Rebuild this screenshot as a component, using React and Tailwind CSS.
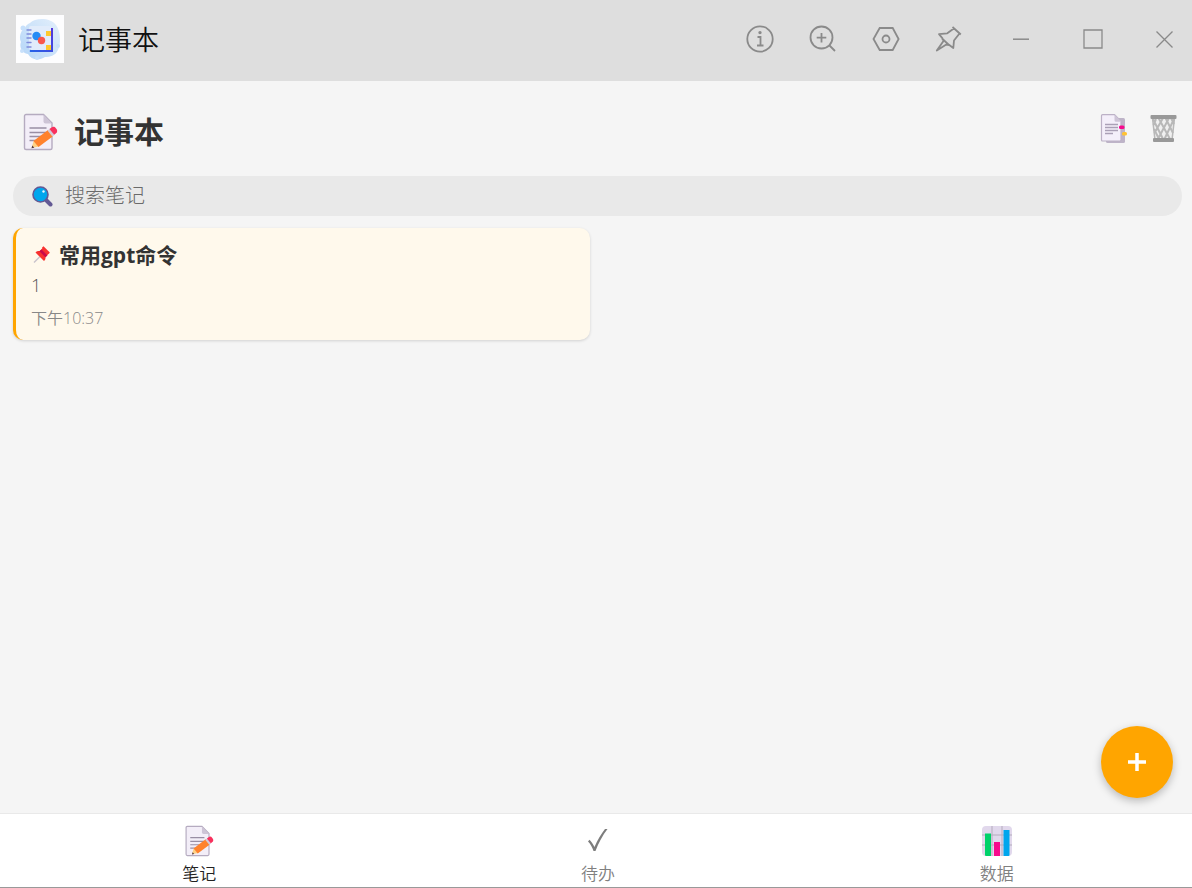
import { useState } from "react";

const MemoIcon = ({ className }) => (
  <svg className={className} viewBox="0 0 36 38" aria-hidden="true">
    <path d="M4 1.5h17.5L30 10v25a1.5 1.5 0 0 1-1.5 1.5H4A1.5 1.5 0 0 1 2.5 35V3A1.500 1.500 0 0 1 4 1.500z" fill="#f3eef8" stroke="#b5abc0" strokeWidth="1.4" />
    <path d="M21.5 1.5v7a2 2 0 0 0 2 2H30z" fill="#cdc4d6" />
    <path d="M7.500 15h17M7.500 19.500h17M7.500 23.500h12M7.500 27.500h8" stroke="#998ea4" strokeWidth="1.4" />
    <path d="M9.500 35l2.300-7.500 5.200 6z" fill="#ffd184" />
    <path d="M11.500 28L26 17l5 6.200L16.500 34z" fill="#ff822d" />
    <path d="M25.500 17.500l2.500-1.800 4.500 6-2 2z" fill="#d3cbd8" />
    <path d="M27.500 16l2-1.600c1.600-1.200 3.300-.6 4.200.6l.9 1.200c1 1.500.6 3-.6 4l-1.800 1.500z" fill="#f8315d" />
    <path d="M9.500 35.300l.8-2.800 2 2.200z" fill="#533a42" />
  </svg>
);

const PagesIcon = () => (
  <svg className="w-7 h-8" viewBox="0 0 28 32" aria-hidden="true">
    <rect x="6" y="5" width="19" height="25" rx="1.5" fill="#beb4c8" />
    <path d="M2.500 1.700H14.500l6.500 6.500V27a1 1 0 0 1-1 1H2.500a1 1 0 0 1-1-1V2.700a1 1 0 0 1 1-1z" fill="#f4effa" stroke="#bcb1c6" strokeWidth="1.200" />
    <path d="M14.500 1.500v5.700a1.500 1.500 0 0 0 1.500 1.500h5.500z" fill="#cdc4d6" />
    <path d="M5 11.500h13M5 14.500h13M5 17.500h13M5 20.500h8" stroke="#aaa0b6" strokeWidth="1.500" />
    <rect x="19" y="12.500" width="5.500" height="3.500" rx="1.500" fill="#f70a8d" />
    <rect x="22" y="19" width="5" height="3.500" rx="1.500" fill="#ffc233" />
  </svg>
);

const BasketIcon = () => (
  <svg className="w-7 h-8" viewBox="0 0 28 32" aria-hidden="true">
    <path d="M2.500 5h22L22 27H5z" fill="#f0f0f0" stroke="#b8b8b8" strokeWidth="1.500" />
    <path d="M3 6l10 20M8.500 5L20 26M15.500 5L23 20M21 5l3 6M6 6L3.500 12M13 5L4.500 20M19 5L8 26M24 6L14.500 26M4 16l5 10" fill="none" stroke="#b8b8b8" strokeWidth="2" />
    <rect x="0.500" y="2" width="26" height="4" rx="1" fill="#999" />
    <rect x="3" y="25" width="21" height="4" rx="1" fill="#999" />
  </svg>
);

const SearchIcon = () => (
  <svg className="w-[22px] h-[22px]" viewBox="0 0 22 22" aria-hidden="true">
    <path d="M14.500 14.500l5 5" stroke="#635994" strokeWidth="4" strokeLinecap="round" />
    <circle cx="9.500" cy="9.500" r="7.500" fill="#00a6ed" stroke="#635994" strokeWidth="1.600" />
    <circle cx="12.500" cy="6.500" r="1.200" fill="#e8f7ff" />
  </svg>
);

const PushpinIcon = () => (
  <svg className="w-[18px] h-[18px]" viewBox="0 0 18 18" aria-hidden="true">
    <path d="M1 16.500l6-6" stroke="#c9c3cc" strokeWidth="1.400" />
    <path d="M2.500 6.500C3.700 5 5.500 4.800 6.800 5L10 1.500l6 6-3.500 3.200c.2 1.800-.2 3.200-1.500 4.300z" fill="#f8312f" />
    <path d="M8.500 3.500l6 6-2 1.800L6.300 5.300z" fill="#ca0b4a" />
    <path d="M9 1.500L10.500.3 16.800 6.500 15.800 8z" fill="#f8312f" />
  </svg>
);

const ChartIcon = ({ className }) => (
  <svg className={className} viewBox="0 0 30 32" aria-hidden="true">
    <rect y="1" width="30" height="30" rx="4" fill="#e1d8ec" />
    <path d="M0 10h30M0 20h30M10 1v30M20 1v30" stroke="#b4acbc" strokeWidth="1" />
    <path d="M3 8.500h6V31H4q-1 0-1-1z" fill="#00d26a" />
    <path d="M12 17h6v14h-6z" fill="#f70a8d" />
    <path d="M21.500 5h6v25q0 1-1 1h-5z" fill="#00a6ed" />
  </svg>
);

const CheckIcon = ({ className }) => (
  <svg className={className} viewBox="0 0 30 32" aria-hidden="true">
    <path d="M5 16.500l1.500-1.700c1.700 1.500 3.700 4.500 5 7.200C14.500 15 18.500 8.500 22 4h2.500C19.500 10.500 15.500 18 12.500 26h-2C9.500 23 7.500 19 5 16.500z" fill="#7d7d7d" />
  </svg>
);

const AppLogo = () => (
  <svg className="w-12 h-12" viewBox="0 0 48 48" aria-hidden="true">
    <defs>
      <linearGradient id="cloud" x1="1" y1="0" x2="0" y2="1">
        <stop offset="0" stopColor="#e3effb" />
        <stop offset="1" stopColor="#b3d5f8" />
      </linearGradient>
      <linearGradient id="spine" x1="0" y1="1" x2="1" y2="0">
        <stop offset="0" stopColor="#2464e8" />
        <stop offset="1" stopColor="#5535d8" />
      </linearGradient>
    </defs>
    <rect width="48" height="48" fill="#fdfdfe" />
    <path d="M14 8c5-5 20-6 26 2 5 7 5 19 2 25-3 6-8 7-13 7-6 4-14 3-17-3-6-1-9-7-7-12-3-6 1-13 4-14 1-3 3-4 5-5z" fill="url(#cloud)" />
    <g fill="#c7e0fb">
      <circle cx="7" cy="13" r="2.500" />
      <circle cx="6" cy="36" r="2" />
      <circle cx="21" cy="43" r="2" />
      <circle cx="42" cy="31" r="2" />
    </g>
    <path d="M17 13h20v24H15q-2 0-1-2z" fill="url(#spine)" />
    <rect x="13" y="11" width="22" height="24" rx="2" fill="#e1ecfb" />
    <path d="M30 16h5v5h-5zM30 30h5v5h-5z" fill="#fdc92e" />
    <path d="M11 15h4M11 19h4M11 23h4M11 27.500h4M11 32h4" stroke="#7f8cdc" strokeWidth="1.400" strokeLinecap="round" />
    <circle cx="20.500" cy="21" r="4.200" fill="#258cf5" />
    <circle cx="25.500" cy="25.500" r="3.700" fill="#f8584e" />
  </svg>
);

const toolIcons = [
  {
    label: "关于",
    draw: (
      <>
        <circle cx="14" cy="14" r="12.700" />
        <path d="M11.500 12h3v8.500M11 20.500h6.500" />
        <circle cx="14" cy="7.600" r="0.800" fill="currentColor" />
      </>
    ),
  },
  {
    label: "放大",
    draw: (
      <>
        <circle cx="12.500" cy="12.500" r="11" />
        <path d="M12.500 8v9.500M7.700 12.700h9.600M20.500 20.500l5.500 5.500" />
      </>
    ),
  },
  {
    label: "设置",
    draw: (
      <>
        <path d="M7.700 3h13l5.900 11-5.900 11h-13L1.500 14z" />
        <circle cx="14" cy="14" r="3.500" />
      </>
    ),
  },
  {
    label: "置顶",
    draw: (
      <path
        d="M17.500 2l8.300 7.500M18.800 3.500l-6.500 4.800-8.300.8 3.300 4L8.500 16 1.800 25.500l9.500-6 3 .5 4 3 .7-7.500 5.500-7M7 13.500l7 6.500"
        strokeLinejoin="round"
      />
    ),
  },
];

const TitleBar = () => (
  <header className="flex items-center justify-between h-[81px] shrink-0 pl-4 bg-[#dedede]">
    <div className="flex items-center gap-[14px] pb-1">
      <AppLogo />
      <span className="pt-[2px] text-[27px] leading-9 font-[350] text-[#111]">记事本</span>
    </div>
    <div className="flex items-center text-[#8a8a8a] pb-[3px]">
      <div className="flex gap-[35px] mr-11">
        {toolIcons.map((icon) => (
          <button key={icon.label} type="button" aria-label={icon.label}>
            <svg className="w-7 h-7" viewBox="0 0 28 28" fill="none" stroke="currentColor" strokeWidth="1.800">
              {icon.draw}
            </svg>
          </button>
        ))}
      </div>
      <div className="flex gap-11 pr-[13px]">
        <button type="button" aria-label="最小化">
          <svg className="w-7 h-7" viewBox="0 0 28 28" stroke="currentColor" strokeWidth="1.500">
            <path d="M6 14.200h16" />
          </svg>
        </button>
        <button type="button" aria-label="最大化">
          <svg className="w-7 h-7" viewBox="0 0 28 28" fill="none" stroke="currentColor" strokeWidth="1.300">
            <path d="M5 5h18v18H5z" />
          </svg>
        </button>
        <button type="button" aria-label="关闭">
          <svg className="w-7 h-7" viewBox="0 0 28 28" stroke="currentColor" strokeWidth="1.300">
            <path d="M5.500 6.500l16 16M21.500 6.500l-16 16" />
          </svg>
        </button>
      </div>
    </div>
  </header>
);

const NoteCard = ({ title, content, time }) => (
  <article className="rounded-[10px] border-l-[3px] border-[#ffa500] bg-[#fff9ec] pl-[15px] pr-4 pt-[13px] pb-[10px] shadow-[0_1px_3px_rgba(0,0,0,0.15)]">
    <h2 className="flex items-center gap-2 pl-[2px] text-[21px] leading-7 font-bold text-[#333]">
      <PushpinIcon />
      {title}
    </h2>
    <p className="mt-1 text-lg leading-6 font-[350] text-[#555]">{content}</p>
    <time className="block mt-[9px] text-base leading-6 font-[350] text-[#888]">{time}</time>
  </article>
);

const tabs = [
  { id: "notes", label: "笔记", icon: MemoIcon },
  { id: "todo", label: "待办", icon: CheckIcon },
  { id: "data", label: "数据", icon: ChartIcon },
];

const notes = [{ id: 1, title: "常用gpt命令", content: "1", time: "下午10:37" }];

const App = () => {
  const [activeTab, setActiveTab] = useState("notes");
  const [keyword, setKeyword] = useState("");

  const visibleNotes = notes.filter((note) => note.title.includes(keyword));

  return (
    <div className="flex flex-col h-screen overflow-hidden bg-[#f5f5f5] font-['Open_Sans','Noto_Sans_CJK_SC',sans-serif]">
      <TitleBar />

      <main className="flex-1 pl-[13px] pr-[10px] pt-7">
        <div className="flex items-start justify-between h-[67px]">
          <h1 className="flex items-center gap-4 pl-[9px] text-[30px] leading-[46px] font-bold text-[#333]">
            <MemoIcon className="w-9 h-[38px]" />
            记事本
          </h1>
          <div className="flex gap-[22px] pt-1 pr-1">
            <button type="button" aria-label="笔记列表">
              <PagesIcon />
            </button>
            <button type="button" aria-label="回收站">
              <BasketIcon />
            </button>
          </div>
        </div>

        <label className="flex items-center gap-3 h-10 pl-[18px] pr-4 rounded-full bg-[#e9e9e9]">
          <SearchIcon />
          <input
            type="text"
            aria-label="搜索笔记"
            placeholder="搜索笔记"
            value={keyword}
            onChange={(e) => setKeyword(e.target.value)}
            className="flex-1 bg-transparent text-xl font-light text-[#333] placeholder:text-[#6a6a6a] outline-none"
          />
        </label>

        <div className="grid grid-cols-2 gap-[15px] mt-3">
          {visibleNotes.map((note) => (
            <NoteCard key={note.id} title={note.title} content={note.content} time={note.time} />
          ))}
        </div>
      </main>

      <button
        type="button"
        aria-label="新建笔记"
        className="fixed right-[19px] bottom-[90px] flex items-center justify-center size-[72px] rounded-full bg-[#ffa500] text-white shadow-[0_3px_8px_rgba(0,0,0,0.25)]"
      >
        <svg className="w-[18px] h-[18px]" viewBox="0 0 18 18" stroke="currentColor" strokeWidth="3.500" aria-hidden="true">
          <path d="M9 0v18M0 9h18" />
        </svg>
      </button>

      <nav className="shrink-0 h-[75px] bg-white border-t border-t-[#e9e9e9] border-b border-b-[#999]">
        <div className="grid grid-cols-3 -mr-1">
          {tabs.map((tab) => {
            const Icon = tab.icon;
            return (
              <button
                key={tab.id}
                type="button"
                onClick={() => setActiveTab(tab.id)}
                className={`flex flex-col items-center pt-[11px] text-[17px] leading-6 font-[350] ${
                  activeTab === tab.id ? "text-[#222]" : "text-[#808080]"
                }`}
              >
                <Icon className="w-[30px] h-8 mb-[5px]" />
                {tab.label}
              </button>
            );
          })}
        </div>
      </nav>
    </div>
  );
};

export default App;
